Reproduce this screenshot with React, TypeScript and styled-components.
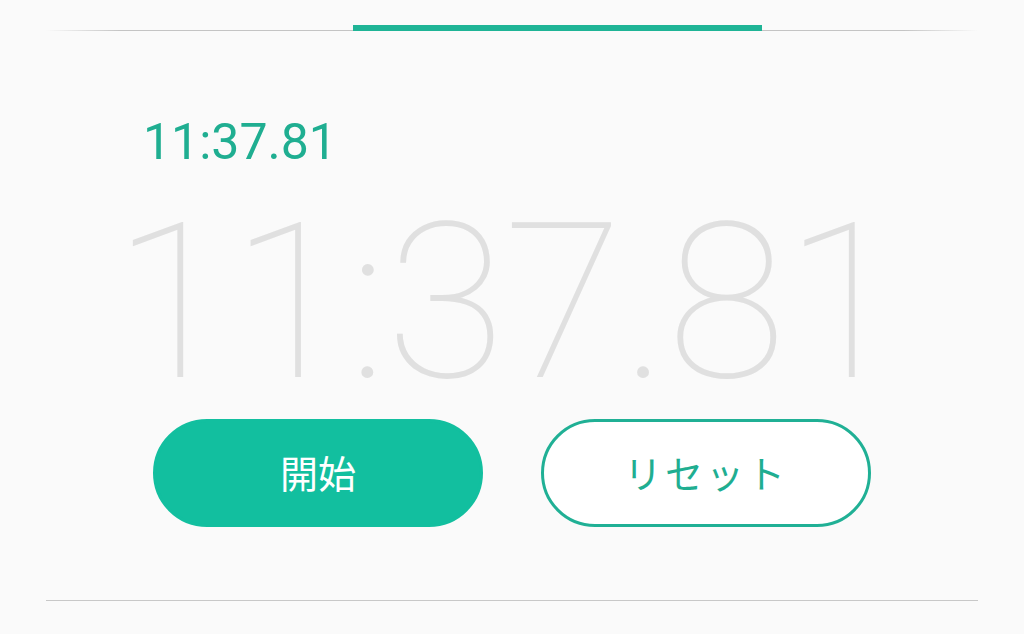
import React from "react";
import styled, { createGlobalStyle } from "styled-components";

const GlobalStyle = createGlobalStyle`
  html, body {
    margin: 0;
    padding: 0;
    background: #fafafa;
  }
  body {
    font-family: Roboto, "Noto Sans CJK JP", sans-serif;
  }
`;

const Screen = styled.div`
  width: 1024px;
  height: 634px;
  box-sizing: border-box;
  background: #fafafa;
  display: flex;
  flex-direction: column;
  align-items: center;
  padding: 24px 46px 0;
  overflow: hidden;
`;

const TabBar = styled.div`
  width: 100%;
  height: 7px;
  display: flex;
  justify-content: flex-start;
  align-items: flex-end;
  background: linear-gradient(
      to right,
      rgba(190, 190, 190, 0) 0%,
      #c4c4c4 8%,
      #c4c4c4 92%,
      rgba(190, 190, 190, 0) 100%
    )
    bottom / 100% 1px no-repeat;
`;

const Indicator = styled.div`
  width: 409px;
  height: 6px;
  margin-left: 307px;
  background: #1fb496;
`;

const Body = styled.div`
  width: 100%;
  display: flex;
  flex-direction: column;
  align-items: flex-start;
  padding-left: 97px;
  box-sizing: border-box;
`;

const LapTime = styled.div`
  margin-top: 86px;
  font-family: Roboto, sans-serif;
  font-size: 50px;
  font-weight: 400;
  line-height: 1;
  color: #1fae91;
`;

const BigTime = styled.div`
  margin-top: 46px;
  margin-left: -30px;
  font-family: Roboto, sans-serif;
  font-weight: 100;
  font-size: 218px;
  line-height: 180px;
  height: 180px;
  color: #e0e0e0;
  letter-spacing: -1.5px;
  white-space: nowrap;
`;

const Buttons = styled.div`
  display: flex;
  gap: 58px;
  margin-top: 26px;
  margin-left: 10px;
`;

const PillButton = styled.button<{ $filled?: boolean }>`
  width: 330px;
  height: 108px;
  box-sizing: border-box;
  border-radius: 54px;
  border: 3px solid ${(p) => (p.$filled ? "#12bf9f" : "#20b095")};
  background: ${(p) => (p.$filled ? "#12bf9f" : "#ffffff")};
  color: ${(p) => (p.$filled ? "#ffffff" : "#1fae91")};
  font-family: "Noto Sans CJK JP", sans-serif;
  font-size: 38px;
  font-weight: 400;
  letter-spacing: ${(p) => (p.$filled ? "0" : "3px")};
  display: flex;
  align-items: center;
  justify-content: center;
  padding: 0 0 4px;
`;

const Divider = styled.div`
  width: 100%;
  height: 1px;
  background: #c8c8c8;
  margin-top: 73px;
`;

export default function App() {
  return (
    <>
      <GlobalStyle />
      <Screen>
        <TabBar>
          <Indicator />
        </TabBar>
        <Body>
          <LapTime>11:37.81</LapTime>
          <BigTime>11:37.81</BigTime>
          <Buttons>
            <PillButton $filled>開始</PillButton>
            <PillButton>リセット</PillButton>
          </Buttons>
        </Body>
        <Divider />
      </Screen>
    </>
  );
}
